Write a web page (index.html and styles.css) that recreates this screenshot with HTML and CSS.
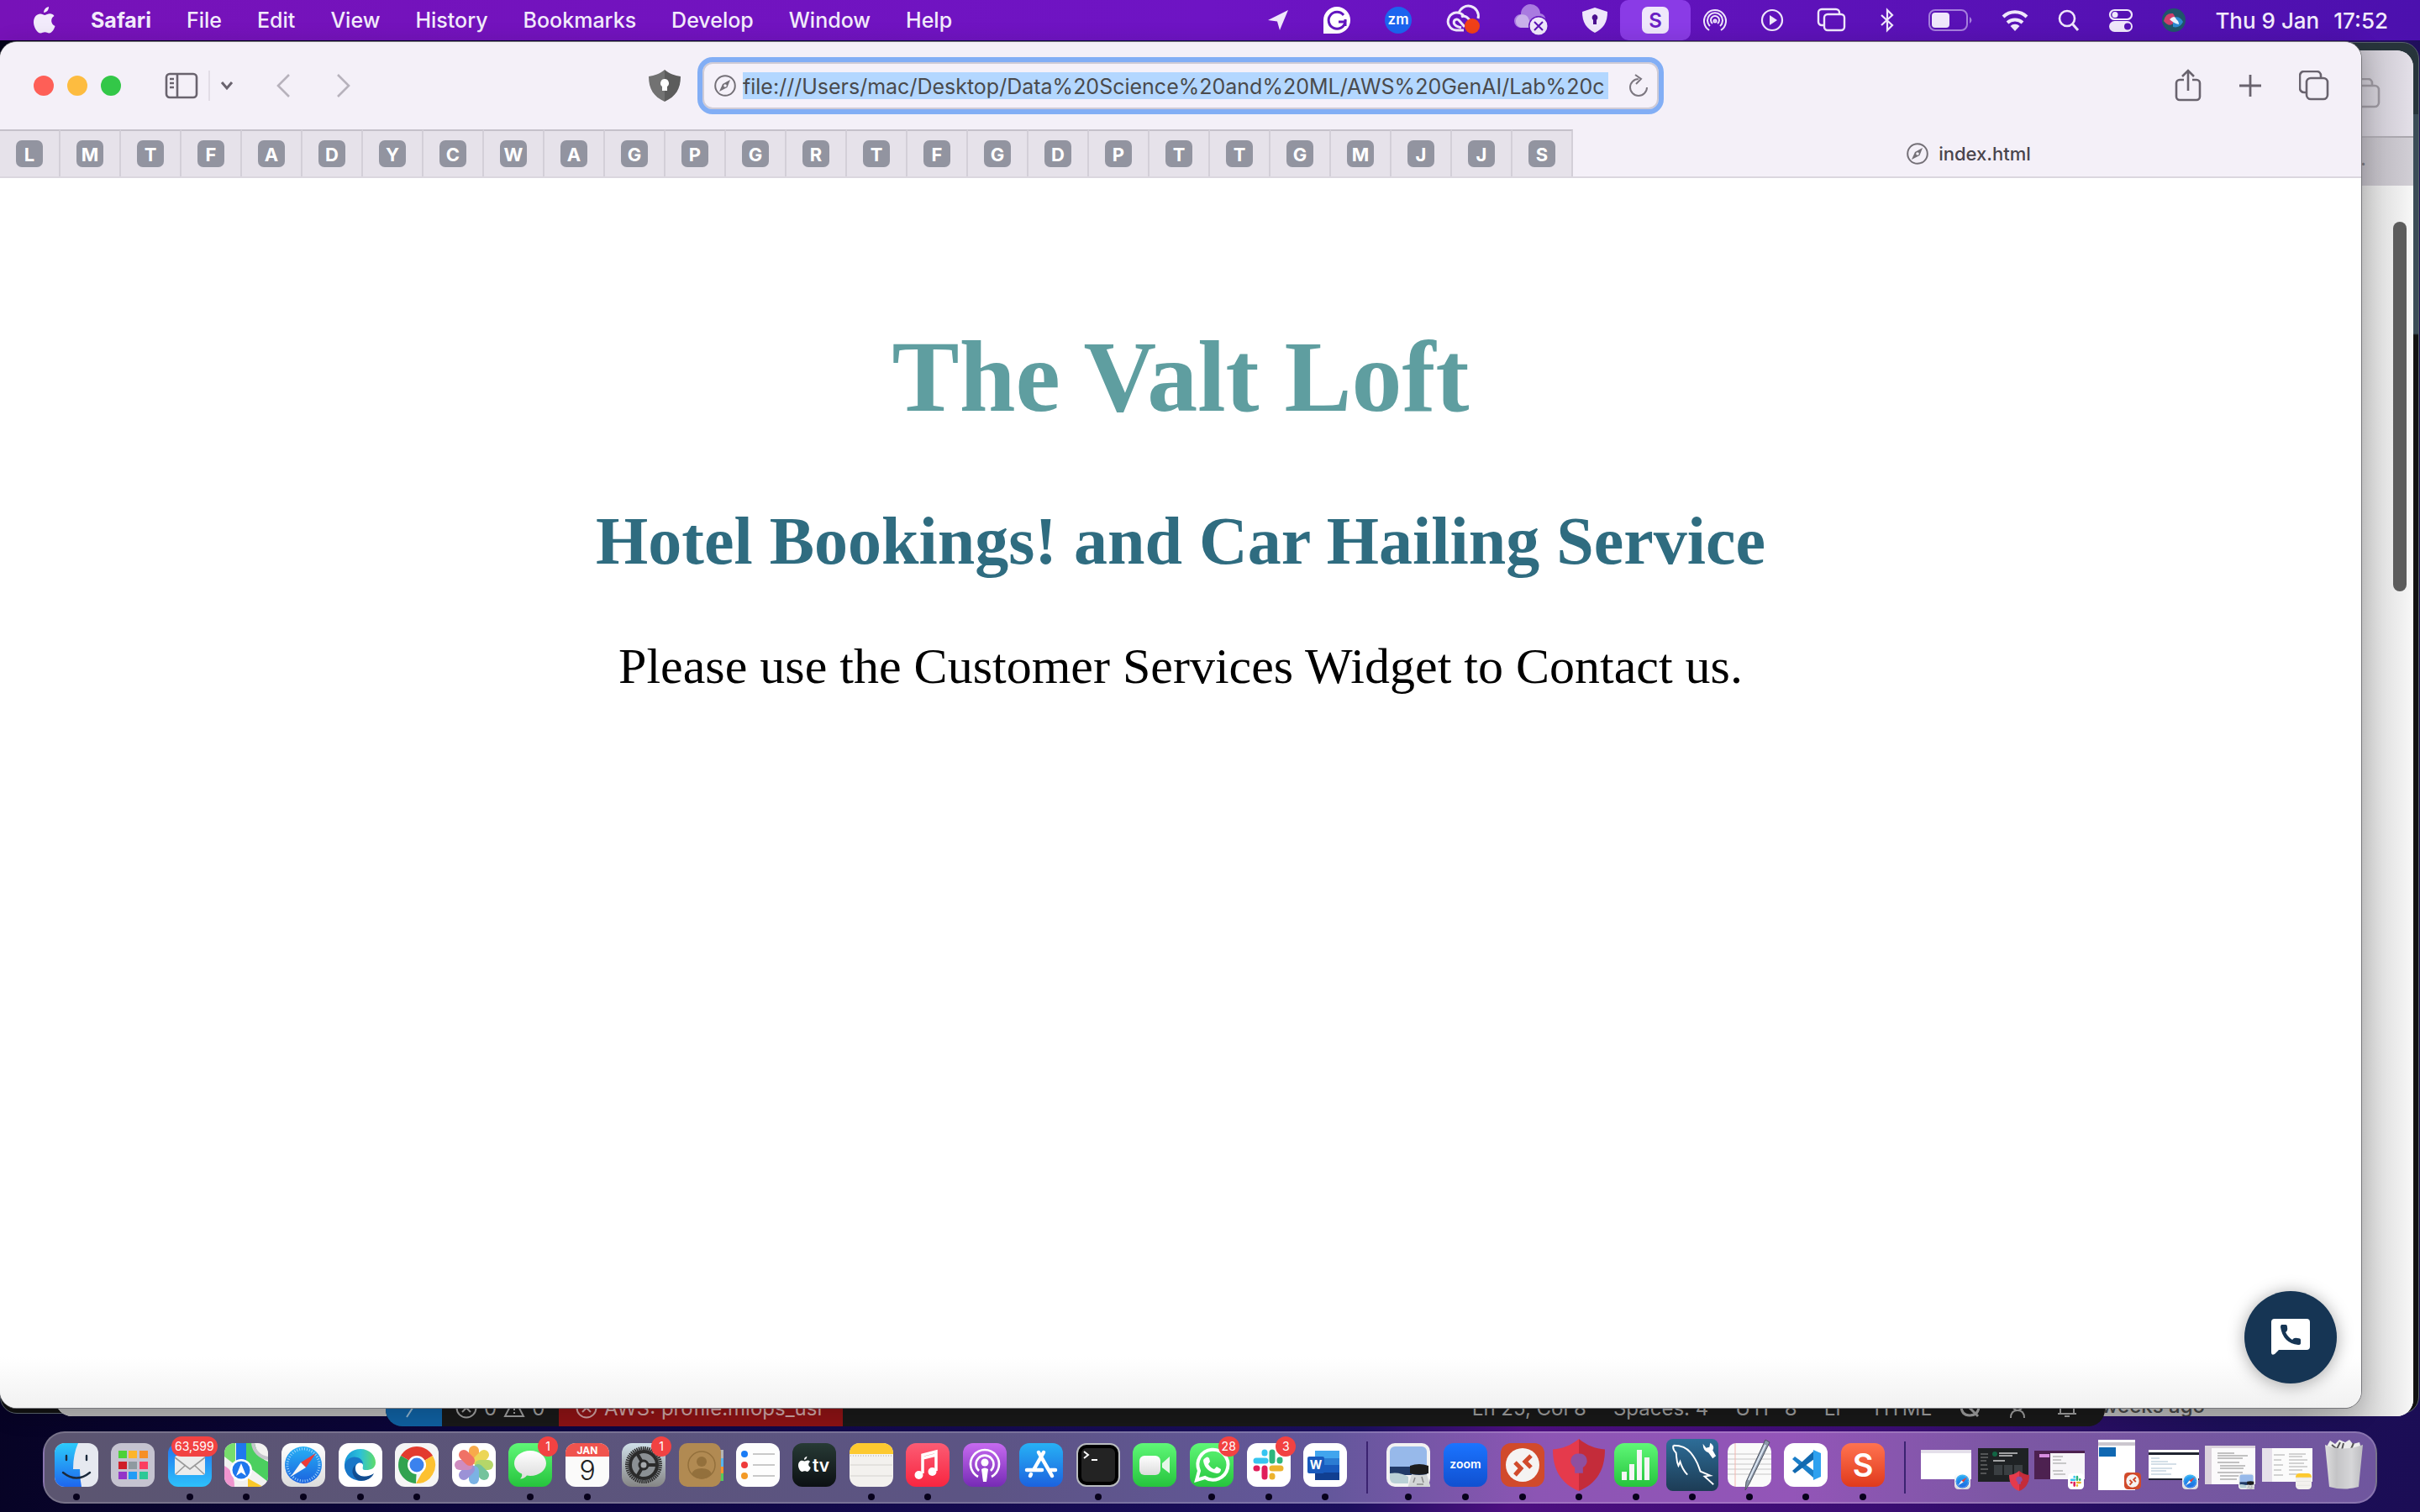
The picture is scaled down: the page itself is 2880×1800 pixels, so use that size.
FILE: index.html
```html
<!DOCTYPE html>
<html lang="en">
<head>
<meta charset="utf-8">
<title>Desktop</title>
<link rel="stylesheet" href="styles.css">
</head>
<body>
<svg class="defs" aria-hidden="true">
  <defs>
    <linearGradient id="gWhite" x1="0" y1="0" x2="0" y2="1"><stop offset="0" stop-color="#fff"/><stop offset="1" stop-color="#dcdcdc"/></linearGradient>
    <linearGradient id="gBlue" x1="0" y1="0" x2="0" y2="1"><stop offset="0" stop-color="#27b1f5"/><stop offset="1" stop-color="#1b62df"/></linearGradient>
    <linearGradient id="gMail" x1="0" y1="0" x2="0" y2="1"><stop offset="0" stop-color="#2272ef"/><stop offset="1" stop-color="#2dc1fb"/></linearGradient>
    <linearGradient id="gFinder" x1="0" y1="0" x2="0" y2="1"><stop offset="0" stop-color="#2ccbfb"/><stop offset="1" stop-color="#1e66ee"/></linearGradient>
    <linearGradient id="gGreen" x1="0" y1="0" x2="0" y2="1"><stop offset="0" stop-color="#5ff777"/><stop offset="1" stop-color="#26c43d"/></linearGradient>
    <linearGradient id="gRed" x1="0" y1="0" x2="0" y2="1"><stop offset="0" stop-color="#fb5c74"/><stop offset="1" stop-color="#f92540"/></linearGradient>
    <linearGradient id="gPurple" x1="0" y1="0" x2="0" y2="1"><stop offset="0" stop-color="#c66af0"/><stop offset="1" stop-color="#762bb5"/></linearGradient>
    <linearGradient id="gGrey" x1="0" y1="0" x2="0" y2="1"><stop offset="0" stop-color="#cfdfe8"/><stop offset="1" stop-color="#858585"/></linearGradient>
    <linearGradient id="gDark" x1="0" y1="0" x2="0" y2="1"><stop offset="0" stop-color="#273a35"/><stop offset="1" stop-color="#0c1013"/></linearGradient>
    <linearGradient id="gZoom" x1="0" y1="0" x2="0" y2="1"><stop offset="0" stop-color="#1b74ff"/><stop offset="1" stop-color="#1050d0"/></linearGradient>
    <linearGradient id="gOrange" x1="0" y1="0" x2="0" y2="1"><stop offset="0" stop-color="#ff7350"/><stop offset="1" stop-color="#e03a1c"/></linearGradient>
    <linearGradient id="gSql" x1="0" y1="0" x2="0" y2="1"><stop offset="0" stop-color="#2d6d98"/><stop offset="1" stop-color="#1d3c55"/></linearGradient>
    <linearGradient id="gEdge" x1="0" y1="0" x2="1" y2="0"><stop offset="0" stop-color="#1795d8"/><stop offset=".5" stop-color="#2cc0d8"/><stop offset="1" stop-color="#5fdc6a"/></linearGradient>
    <linearGradient id="gBin" x1="0" y1="0" x2="1" y2="0"><stop offset="0" stop-color="#dedede"/><stop offset=".3" stop-color="#c4c4c6"/><stop offset=".7" stop-color="#d6d6d8"/><stop offset="1" stop-color="#bcbcc0"/></linearGradient>
    <symbol id="safari" viewBox="0 0 52 52"><rect width="52" height="52" rx="12" fill="url(#gWhite)"/><circle cx="26" cy="26" r="22" fill="url(#gBlue)"/><circle cx="26" cy="26" r="19" fill="none" stroke="#9fd3fb" stroke-width="3" stroke-dasharray="1 2"/><path d="M41 12 29 29 23 23z" fill="#ef3b36"/><path d="M11 40 23 23 29 29z" fill="#f5f5f5"/></symbol>
    <symbol id="slack" viewBox="0 0 52 52"><rect width="52" height="52" rx="12" fill="#fff"/><g stroke-width="7" stroke-linecap="round" fill="none"><path d="M22 21H11M21 11v1" stroke="#36c5f0"/><path d="M30 11v10M39 20v1" stroke="#2eb67d"/><path d="M30 30h10M30 39v1" stroke="#ecb22e"/><path d="M21 30v10M11 30h1" stroke="#e01e5a"/></g></symbol>
    <symbol id="rdp" viewBox="0 0 52 52"><rect width="52" height="52" rx="12" fill="#d14a2b"/><circle cx="26" cy="26" r="20" fill="#f5f3f2"/><path d="m17 23 7 7-7 8M36 15l-7 7 7 7" fill="none" stroke="#d14a2b" stroke-width="5"/></symbol>
    <symbol id="avast" viewBox="0 0 64 64"><path d="M32 0C22 8 12 12 0 13c0 25 10 42 32 51z" fill="#e53a4c"/><path d="M32 0c10 8 20 12 32 13 0 25-10 42-32 51z" fill="#c42c3a"/><path d="M32 18a9 9 0 0 0-5 17v7h10v-7a9 9 0 0 0-5-17" fill="#8f4f9f"/></symbol>
    <symbol id="notes" viewBox="0 0 52 52"><rect width="52" height="52" rx="12" fill="#f3f1ee"/><path d="M0 13V12A12 12 0 0 1 12 0h28a12 12 0 0 1 12 12v1z" fill="#fdc92f"/><path d="M1 26h50M1 39h50" stroke="#d4d2cf"/><path d="M1 15h50" stroke="#aaa" stroke-dasharray="1 2"/></symbol>
    <symbol id="preview" viewBox="0 0 52 52"><rect width="52" height="52" rx="10" fill="#f2f2f2"/><path d="M4 10a6 6 0 0 1 6-6h32a6 6 0 0 1 6 6v18H4z" fill="#97b9ea"/><path d="M4 28h44v10H4z" fill="#203a68"/><path d="M4 36q12-2 22 4v8H10a6 6 0 0 1-6-6z" fill="#b9d0d6"/><path d="M28 27q11-4 22 0v9q-11 3-22 0z" fill="#1c1c1c"/><path d="m30 37-5 17h28l-5-17q-9 2-18 0" fill="#d3d6d6"/><path d="m34 41-2 6M42 40l2 7M36 49h8" stroke="#8a8a8a" stroke-width="1.500"/></symbol>
    <symbol id="compass" viewBox="0 0 26 26"><circle cx="13" cy="13" r="11.8" fill="none" stroke="currentColor" stroke-width="2"/><path d="m19 6-3.500 9L6 20l4-9z" fill="currentColor"/><circle cx="13" cy="13" r="1.800" fill="#f4f0f8"/></symbol>
    <symbol id="copies" viewBox="0 0 36 36"><path d="M9 26H6a5 5 0 0 1-5-5V6a5 5 0 0 1 5-5h15a5 5 0 0 1 5 5v3" fill="none" stroke="currentColor" stroke-width="2.600"/><rect x="9" y="9" width="25" height="25" rx="5" fill="none" stroke="currentColor" stroke-width="2.600"/></symbol>
    <symbol id="apple" viewBox="0 0 26 32"><path d="M18 0c.3 3-2 7-6 7 0-3 2-6 6-7M24.500 11c-5 3-4 10 1 12-1 4-4 8.500-7 8.500-2 0-3-1.200-5-1.200s-3.500 1.200-5.200 1.200C4 31.500 0 24 0 18.500 0 12 4 8.500 8 8.500c2.300 0 4 1.400 5.500 1.400S17 8.300 19.500 8.300c2 0 4 1 5 2.700" fill="currentColor"/></symbol>
  </defs>
</svg>

<div class="desktop">
  <header class="menubar">
    <nav class="menus" aria-label="Menu bar">
      <button class="menu" aria-label="Apple"><svg width="26" height="32"><use href="#apple"/></svg></button>
      <button class="menu menu-app">Safari</button>
      <button class="menu">File</button>
      <button class="menu">Edit</button>
      <button class="menu">View</button>
      <button class="menu">History</button>
      <button class="menu">Bookmarks</button>
      <button class="menu">Develop</button>
      <button class="menu">Window</button>
      <button class="menu">Help</button>
    </nav>
    <div class="extras">
      <svg class="w26" viewBox="0 0 26 26"><path d="M25 1 1 13l11 1.500L15 25z" fill="#efe7fb"/></svg>
      <svg class="w32" viewBox="0 0 32 32"><path d="M0 32V16a16 16 0 1 1 16 16z" fill="#fff"/><path d="M24 10a10 10 0 1 0 2 8h-8M26 15v8" fill="none" stroke="#6115bf" stroke-width="3"/></svg>
      <svg class="w32" viewBox="0 0 32 32"><circle cx="16" cy="16" r="16" fill="#1c64ef"/><text x="16" y="21" text-anchor="middle" class="svg-zm">zm</text></svg>
      <svg class="w40" viewBox="0 0 40 32"><path d="M21 28H12a10.500 10.500 0 1 1 9-17M15 8a11 11 0 0 1 23 6M22 24l-6-7c-3-4-9-1-6 4 2 3 5 3 8 4M18 12c4-2 7 0 10 4" fill="none" stroke="#efe7fb" stroke-width="3"/><circle cx="31" cy="23" r="9" fill="#f04018"/></svg>
      <svg class="w40" viewBox="0 0 40 34"><path d="M8 26a8 8 0 0 1 0-16A11 11 0 0 1 31 9a8 8 0 0 1 2 15z" fill="#a97be0"/><path d="M8 26a8 8 0 1 1 8-13l6 13z" fill="#c9b0ea"/><circle cx="29" cy="24" r="12" fill="#6012bc"/><circle cx="29" cy="24" r="10.500" fill="#efe7fb"/><path d="m24 19 10 10m0-10L24 29" stroke="#5b14b4" stroke-width="2"/></svg>
      <svg class="w30" viewBox="0 0 30 30"><path d="M15 0 30 5c0 13-5 20-15 25C5 25 0 18 0 5z" fill="#efe7fb"/><path d="M15 8a4 4 0 0 0-2 7v5h4v-5a4 4 0 0 0-2-7" fill="#4b108f"/></svg>
      <span class="extra-active"><svg class="w32" viewBox="0 0 32 32"><rect width="32" height="32" rx="7" fill="#efe7fb"/><text x="16" y="25" text-anchor="middle" class="svg-s">S</text></svg></span>
      <svg class="w28" viewBox="0 0 28 28" fill="none" stroke="#efe7fb" stroke-width="2"><path d="M7 26a13 13 0 1 1 14 0M8 21a9 9 0 1 1 12 0M11 18a5 5 0 1 1 6 0"/><circle cx="14" cy="15" r="1.500"/></svg>
      <svg class="w26" viewBox="0 0 26 26"><circle cx="13" cy="13" r="12" fill="none" stroke="#efe7fb" stroke-width="2.200"/><path d="m10 7 9 6-9 6z" fill="#efe7fb"/></svg>
      <svg class="w34" viewBox="0 0 34 28" fill="none" stroke="#efe7fb" stroke-width="2.400"><path d="M8 20H5a4 4 0 0 1-4-4V5a4 4 0 0 1 4-4h17a4 4 0 0 1 4 4v2"/><rect x="8" y="7" width="24" height="19" rx="4"/></svg>
      <svg class="w16" viewBox="0 0 16 28"><path d="m1 8 13 12-6 6V2l6 6L1 20" fill="none" stroke="#efe7fb" stroke-width="2.200"/></svg>
      <div class="extras-system">
        <svg class="w52" viewBox="0 0 52 26"><rect x="1" y="1" width="45" height="24" rx="7" fill="none" stroke="#a67fdd" stroke-width="2"/><path d="M49 9q5 4 0 8z" fill="#a67fdd"/><rect x="4" y="4" width="21" height="18" rx="4" fill="#efe7fb"/></svg>
        <svg class="w32" viewBox="0 0 32 32"><path d="M2 12a20 20 0 0 1 28 0M7 19a13 13 0 0 1 18 0" fill="none" stroke="#efe7fb" stroke-width="4"/><path d="M10.500 23a8 8 0 0 1 11 0L16 29z" fill="#efe7fb"/></svg>
        <svg class="w26" viewBox="0 0 26 26"><circle cx="11" cy="11" r="9" fill="none" stroke="#efe7fb" stroke-width="2.600"/><path d="m17 17 7 8" stroke="#efe7fb" stroke-width="3"/></svg>
        <svg class="w28" viewBox="0 0 28 28"><rect x="1" y="2" width="26" height="11" rx="5.500" fill="none" stroke="#efe7fb" stroke-width="2.200"/><circle cx="7" cy="7.500" r="3.500" fill="#efe7fb"/><rect y="15" width="28" height="13" rx="6.500" fill="#efe7fb"/><circle cx="22" cy="21.500" r="4" fill="#5612b5"/></svg>
        <svg class="w28" viewBox="0 0 28 28"><circle cx="14" cy="14" r="14" fill="#20566a"/><path d="M2 15q2-10 11-9 4 5 2 10-6 8-13-1" fill="#cf3f6c"/><path d="M13 22q8 2 12-6-4-8-12-5" fill="#2d8ad0"/><path d="M9 13q6-6 8 0 3 2 3 6-6-1-11-6" fill="#e9f4ff"/></svg>
        <time class="clock"><span>Thu 9 Jan</span><span>17:52</span></time>
      </div>
    </div>
  </header>

  <div class="window dark-window"></div>

  <div class="window back-safari">
    <div class="back-toolbar"><svg class="w36" viewBox="0 0 36 36"><use href="#copies"/></svg></div>
    <div class="back-tabs"><span>…</span></div>
    <div class="back-page"><div class="back-scroll"></div><p class="back-note">weeks ago</p></div>
  </div>

  <div class="window editor">
    <footer class="status">
      <span class="status-remote"><svg class="w26" viewBox="0 0 26 26"><path d="m6 2 7 8-9 14M20 2l-7 8" fill="none" stroke="#8fb0c8" stroke-width="2"/></svg></span>
      <span class="status-problems">
        <svg class="w26" viewBox="0 0 26 26" fill="none" stroke="#999" stroke-width="2"><circle cx="13" cy="13" r="11.500"/><path d="m8 8 10 10M18 8 8 18"/></svg><span>0</span>
        <svg class="w26" viewBox="0 0 26 26" fill="none" stroke="#999" stroke-width="2"><path d="m13 2 11 21H2zM13 10v6M13 18v2"/></svg><span>0</span>
      </span>
      <span class="status-aws"><svg class="w26" viewBox="0 0 26 26" fill="none" stroke="#c79a9a" stroke-width="2"><circle cx="13" cy="13" r="11.500"/><path d="m8 8 10 10M18 8 8 18"/></svg><span>AWS: profile:mlops_usr</span></span>
      <span class="status-right">
        <span>Ln 25, Col 8</span><span>Spaces: 4</span><span>UTF-8</span><span>LF</span><span>HTML</span>
        <svg class="w26" viewBox="0 0 26 26" fill="none" stroke="#999" stroke-width="3"><path d="M3 10q0 12 10 12 11 0 11-12M3 3l20 20"/></svg>
        <svg class="w26" viewBox="0 0 26 26" fill="none" stroke="#999" stroke-width="2"><circle cx="12" cy="10" r="6"/><path d="M4 25q0-9 8-9t8 9M19 6l5-4"/></svg>
        <svg class="w26" viewBox="0 0 26 26" fill="none" stroke="#999" stroke-width="2"><path d="M5 20V10q0-7 8-7t8 7v10M2 20h22M10 23h6"/></svg>
      </span>
    </footer>
  </div>

  <main class="window browser">
    <div class="toolbar">
      <div class="tools-left">
        <div class="lights">
          <button class="light light-close" aria-label="Close"></button>
          <button class="light light-min" aria-label="Minimise"></button>
          <button class="light light-max" aria-label="Zoom"></button>
        </div>
        <button class="tool tool-sidebar" aria-label="Sidebar"><svg width="40" height="32" viewBox="0 0 40 32" fill="none" stroke="#69636e" stroke-width="2.600"><rect x="2" y="2" width="36" height="28" rx="4"/><path d="M15 2v28M6 8h5M6 13h5M6 18h5"/></svg></button>
        <button class="tool tool-groups" aria-label="Tab groups"><svg width="16" height="12" viewBox="0 0 16 12"><path d="m2 2 6 7 6-7" fill="none" stroke="#69636e" stroke-width="3"/></svg></button>
        <button class="tool tool-back" aria-label="Back"><svg width="18" height="30" viewBox="0 0 18 30"><path d="M16 2 3 15l13 13" fill="none" stroke="#b7b2bc" stroke-width="2.600"/></svg></button>
        <button class="tool tool-forward" aria-label="Forward"><svg width="18" height="30" viewBox="0 0 18 30"><path d="m2 2 13 13L2 28" fill="none" stroke="#b7b2bc" stroke-width="2.600"/></svg></button>
        <button class="tool tool-shield" aria-label="Privacy report"><svg width="38" height="38" viewBox="0 0 38 38"><path d="M19 0C13 5 7 7 0 8c0 15 6 24 19 30z" fill="#727272"/><path d="M19 0c6 5 12 7 19 8 0 15-6 24-19 30z" fill="#5c5c5c"/><path d="M19 11a5 5 0 0 0-3 9v5h6v-5a5 5 0 0 0-3-9" fill="#fff"/></svg></button>
      </div>
      <form class="address">
        <svg class="w26 icon-grey" viewBox="0 0 26 26"><use href="#compass"/></svg>
        <input class="address-input" type="text" aria-label="Address" value="file:///Users/mac/Desktop/Data%20Science%20and%20ML/AWS%20GenAI/Lab%20c">
        <button class="tool" type="button" aria-label="Reload"><svg width="24" height="28" viewBox="0 0 24 28" fill="none" stroke="#7c7780" stroke-width="2"><path d="M12 6a10 10 0 1 0 10 10M8 1l7 5-6 6"/></svg></button>
      </form>
      <div class="tools-right">
        <button class="tool" aria-label="Share"><svg width="32" height="38" viewBox="0 0 32 38" fill="none" stroke="#69636e" stroke-width="2.600"><path d="M11 12H6a4 4 0 0 0-4 4v16a4 4 0 0 0 4 4h20a4 4 0 0 0 4-4V16a4 4 0 0 0-4-4h-5M16 25V2M9 8l7-7 7 7"/></svg></button>
        <button class="tool" aria-label="New tab"><svg width="28" height="28" viewBox="0 0 28 28"><path d="M14 1v26M1 14h26" stroke="#69636e" stroke-width="2.800"/></svg></button>
        <button class="tool" aria-label="Tab overview"><svg width="36" height="36"><use href="#copies"/></svg></button>
      </div>
    </div>
    <div class="tabs">
      <button class="tab"><span>L</span></button><button class="tab"><span>M</span></button><button class="tab"><span>T</span></button><button class="tab"><span>F</span></button><button class="tab"><span>A</span></button><button class="tab"><span>D</span></button><button class="tab"><span>Y</span></button><button class="tab"><span>C</span></button><button class="tab"><span>W</span></button><button class="tab"><span>A</span></button><button class="tab"><span>G</span></button><button class="tab"><span>P</span></button><button class="tab"><span>G</span></button><button class="tab"><span>R</span></button><button class="tab"><span>T</span></button><button class="tab"><span>F</span></button><button class="tab"><span>G</span></button><button class="tab"><span>D</span></button><button class="tab"><span>P</span></button><button class="tab"><span>T</span></button><button class="tab"><span>T</span></button><button class="tab"><span>G</span></button><button class="tab"><span>M</span></button><button class="tab"><span>J</span></button><button class="tab"><span>J</span></button><button class="tab"><span>S</span></button>
      <button class="tab-current"><svg class="w26 icon-grey" viewBox="0 0 26 26"><use href="#compass"/></svg>index.html</button>
    </div>
    <article class="page">
      <h1>The Valt Loft</h1>
      <h2>Hotel Bookings! and Car Hailing Service</h2>
      <p>Please use the Customer Services Widget to Contact us.</p>
      <button class="chat" aria-label="Contact us"><svg width="48" height="44" viewBox="0 0 48 44"><path d="M5 0h38a4 4 0 0 1 4 4v29a4 4 0 0 1-4 4H10l-5 5q-4 2-4-2V4a4 4 0 0 1 4-4" fill="#fff"/><path d="M13 7h5q2 0 2 3 1 4-2 6 3 6 8 9 2-3 6-2 4 0 4 2v4q0 2-3 2Q15 29 12 10q0-2 1-3" fill="#163554"/></svg></button>
    </article>
  </main>

  <nav class="dock" aria-label="Dock">
    <button class="app open" aria-label="Finder"><svg viewBox="0 0 52 52"><rect width="52" height="52" rx="12" fill="#e6e9f0"/><path d="M28 0H12A12 12 0 0 0 0 12v28a12 12 0 0 0 12 12h20q-2-10-2-21h-8Q22 13 28 0" fill="url(#gFinder)"/><path d="M14 15v5M38 15v5M10 35q16 13 32 0" fill="none" stroke="#1b2a3c" stroke-width="2.400" stroke-linecap="round"/></svg></button>
    <button class="app" aria-label="Launchpad"><svg viewBox="0 0 52 52"><rect width="52" height="52" rx="12" fill="#c5c3d0"/><path d="M9 9h10v9H9z" fill="#4cd137"/><path d="M21 9h10v9H21z" fill="#fdb52b"/><path d="M34 9h10v9H34z" fill="#f68f25"/><path d="M9 22h10v9H9z" fill="#cf1e28"/><path d="M21 22h10v9H21z" fill="#8f9aa0"/><path d="M34 22h10v9H34z" fill="#fb3e60"/><path d="M9 34h10v9H9z" fill="#9336c8"/><path d="M21 34h10v9H21z" fill="#219cf5"/><path d="M34 34h10v9H34z" fill="#2cc896"/></svg></button>
    <button class="app open" aria-label="Mail"><svg viewBox="0 0 52 52"><rect width="52" height="52" rx="12" fill="url(#gMail)"/><rect x="8" y="15" width="36" height="23" rx="3" fill="#ececec"/><path d="m8 17 18 14 18-14M9 37l12-11M43 37 31 26" fill="none" stroke="#9a9a9a" stroke-width="1.600"/></svg><span class="badge">63,599</span></button>
    <button class="app open" aria-label="Maps"><svg viewBox="0 0 52 52"><clipPath id="cm"><rect width="52" height="52" rx="12"/></clipPath><g clip-path="url(#cm)"><path d="M0 0h52v52H0z" fill="#f2f2f0"/><path d="M0 0h13v26L0 16z" fill="#77de6c"/><path d="M26 0h10q4 18 16 22v24L26 26z" fill="#4bcf5f"/><path d="M0 27q12 6 12 25H0z" fill="#f095cf"/><path d="M28 52V42l18 10z" fill="#fbc829"/><path d="M52 18A20 20 0 0 1 34 0" fill="none" stroke="#c5c5cb" stroke-width="4"/><path d="M14 0h12v30H14z" fill="#1f77ee"/></g><circle cx="20" cy="32" r="13" fill="#fff"/><circle cx="20" cy="32" r="10.500" fill="#1f77ee"/><path d="m20 24 6 15-6-4-6 4z" fill="#fff"/></svg></button>
    <button class="app open" aria-label="Safari"><svg><use href="#safari"/></svg></button>
    <button class="app open" aria-label="Edge"><svg viewBox="0 0 52 52"><rect width="52" height="52" rx="12" fill="#fff"/><path d="M7 26C7 14 16 7 26 7c11 0 18 8 18 16 0 7-6 9-11 9-6 0-4-2-4-6-2-6-11-5-14 1-2 5 0 12 4 15C11 40 7 33 7 26" fill="url(#gEdge)"/><path d="M7 26c2-7 9-11 15-9 5 1 7 5 7 8-4-3-9-1-9 5 0 9 11 13 21 7-5 8-14 9-20 7C12 42 7 35 7 26" fill="#1876c8"/><path d="M20 26c-4 12 10 18 22 10-4 8-13 10-19 8-7-4-9-13-3-18" fill="#124d90"/></svg></button>
    <button class="app open" aria-label="Chrome"><svg viewBox="0 0 52 52"><rect width="52" height="52" rx="12" fill="#f5f5f5"/><path d="M26 26 7 15a22 22 0 0 1 38 0z" fill="#e33b2e"/><path d="M26 26 7 15a22 22 0 0 0 18 33z" fill="#31a350"/><path d="m26 26 19-11a22 22 0 0 1-20 33l9-16z" fill="#fdc131"/><circle cx="26" cy="26" r="11" fill="#fff"/><circle cx="26" cy="26" r="8.500" fill="#3b82ee"/></svg></button>
    <button class="app" aria-label="Photos"><svg viewBox="0 0 52 52"><rect width="52" height="52" rx="12" fill="#fff"/><g opacity=".85"><rect x="20" y="3" width="12" height="22" rx="6" fill="#f79c2c"/><rect x="20" y="3" width="12" height="22" rx="6" fill="#e9cf3a" transform="rotate(45 26 26)"/><rect x="20" y="3" width="12" height="22" rx="6" fill="#a9d04f" transform="rotate(90 26 26)"/><rect x="20" y="3" width="12" height="22" rx="6" fill="#5cb98b" transform="rotate(135 26 26)"/><rect x="20" y="3" width="12" height="22" rx="6" fill="#65a5e0" transform="rotate(180 26 26)"/><rect x="20" y="3" width="12" height="22" rx="6" fill="#8a7fd0" transform="rotate(225 26 26)"/><rect x="20" y="3" width="12" height="22" rx="6" fill="#c678b6" transform="rotate(270 26 26)"/><rect x="20" y="3" width="12" height="22" rx="6" fill="#ee5a4c" transform="rotate(315 26 26)"/></g></svg></button>
    <button class="app open" aria-label="Messages"><svg viewBox="0 0 52 52"><rect width="52" height="52" rx="12" fill="url(#gGreen)"/><path d="M26 9c11 0 19 7 19 15s-8 15-19 15l-4-.5q-3 4-8 4 3-3 2-6C10 34 7 29 7 24 7 16 15 9 26 9" fill="url(#gWhite)"/></svg><span class="badge">1</span></button>
    <button class="app open" aria-label="Calendar"><svg viewBox="0 0 52 52"><rect width="52" height="52" rx="12" fill="#fbfbfa"/><path d="M0 16v-4A12 12 0 0 1 12 0h28a12 12 0 0 1 12 12v4z" fill="#f0544e"/><text x="26" y="13" text-anchor="middle" class="svg-jan">JAN</text><text x="26" y="44" text-anchor="middle" class="svg-day">9</text></svg></button>
    <button class="app" aria-label="System Settings"><svg viewBox="0 0 52 52"><rect width="52" height="52" rx="12" fill="url(#gGrey)"/><circle cx="26" cy="26" r="20" fill="#8b9094" stroke="#2b2b2b" stroke-width="4" stroke-dasharray="1.500 1"/><circle cx="26" cy="26" r="16" fill="none" stroke="#2b2b2b" stroke-width="4"/><path d="M26 26 18 12M26 26h17M26 26l-8 14" stroke="#2b2b2b" stroke-width="4"/><circle cx="26" cy="26" r="5" fill="#a5a9ac" stroke="#2b2b2b" stroke-width="3"/></svg><span class="badge">1</span></button>
    <button class="app" aria-label="Contacts"><svg viewBox="0 0 52 52"><path d="M46 8h7v10h-7z" fill="#b5b5b5"/><path d="M46 18h7v10h-7z" fill="#55b5f0"/><path d="M46 28h7v8h-7z" fill="#f7932d"/><path d="M46 36h7v9h-7z" fill="#55c95c"/><rect width="50" height="52" rx="10" fill="#b18a52"/><g fill="#93703c"><circle cx="27" cy="22" r="6"/><path d="M15 37q2-7 12-7t12 7q-12 11-24 0"/></g><circle cx="27" cy="26" r="16" fill="none" stroke="#93703c" stroke-width="1.500"/></svg></button>
    <button class="app" aria-label="Reminders"><svg viewBox="0 0 52 52"><rect width="52" height="52" rx="12" fill="#fdfdfd"/><g stroke="#c9c9c9" stroke-width="2"><path d="M20 13h26M20 26h26M20 39h26"/></g><circle cx="10" cy="13" r="4" fill="#1a7cf5"/><circle cx="10" cy="26" r="4" fill="#ee3b3a"/><circle cx="10" cy="39" r="4" fill="#f39a26"/></svg></button>
    <button class="app" aria-label="TV"><svg viewBox="0 0 52 52"><rect width="52" height="52" rx="12" fill="url(#gDark)"/><svg x="7" y="15" width="15" height="20" color="#fff"><use href="#apple"/></svg><text x="34" y="34" text-anchor="middle" class="svg-tv">tv</text></svg></button>
    <button class="app open" aria-label="Notes"><svg><use href="#notes"/></svg></button>
    <button class="app open" aria-label="Music"><svg viewBox="0 0 52 52"><rect width="52" height="52" rx="12" fill="url(#gRed)"/><path d="M20 36V14l16-4v23M20 18l16-4" fill="none" stroke="#fff" stroke-width="3.500"/><circle cx="15.500" cy="38" r="5" fill="#fff"/><circle cx="31.500" cy="34" r="5" fill="#fff"/></svg></button>
    <button class="app" aria-label="Podcasts"><svg viewBox="0 0 52 52"><rect width="52" height="52" rx="12" fill="url(#gPurple)"/><g fill="none" stroke="#fff" stroke-width="2.600"><path d="M18 40a17 17 0 1 1 16 0M19 33a10.500 10.500 0 1 1 14 0"/></g><circle cx="26" cy="23" r="4.500" fill="#fff"/><path d="M22 31q4-3 8 0l-2 15h-4z" fill="#fff"/></svg></button>
    <button class="app" aria-label="App Store"><svg viewBox="0 0 52 52"><rect width="52" height="52" rx="12" fill="url(#gBlue)"/><g stroke="#fff" stroke-width="4.500" stroke-linecap="round"><path d="M29 11 17 32M13 39l1-2M23 11l16 28M9 32h18M37 32h6"/></g></svg></button>
    <button class="app open" aria-label="Terminal"><svg viewBox="0 0 52 52"><rect width="52" height="52" rx="12" fill="#b9bcc0"/><rect x="2" y="2" width="48" height="48" rx="10" fill="#000"/><rect x="6" y="6" width="40" height="40" rx="6" fill="#232323"/><path d="m9 10 5 4-5 4M18 20h7" fill="none" stroke="#fff" stroke-width="2"/></svg></button>
    <button class="app" aria-label="FaceTime"><svg viewBox="0 0 52 52"><rect width="52" height="52" rx="12" fill="url(#gGreen)"/><rect x="8" y="15" width="25" height="23" rx="6" fill="url(#gWhite)"/><path d="m35 24 9-8v20l-9-7z" fill="#e6f6e8"/></svg></button>
    <button class="app open" aria-label="WhatsApp"><svg viewBox="0 0 52 52"><rect width="52" height="52" rx="12" fill="url(#gGreen)"/><path d="m8 44 3-11a18 18 0 1 1 7 8z" fill="none" stroke="#fff" stroke-width="4"/><path d="M18 18q3-3 5 0l1 4-2 3q3 5 7 6l3-3 5 3q0 5-5 5-14-2-16-15 0-2 2-3" fill="#fff"/></svg><span class="badge">28</span></button>
    <button class="app open" aria-label="Slack"><svg><use href="#slack"/></svg><span class="badge">3</span></button>
    <button class="app open" aria-label="Word"><svg viewBox="0 0 52 52"><rect width="52" height="52" rx="12" fill="#fff"/><path d="M14 9h29v9H14z" fill="#41a5ee"/><path d="M14 18h29v8H14z" fill="#2b7cd3"/><path d="M14 26h29v9H14z" fill="#185abd"/><path d="M14 35h29v9H14z" fill="#103f91"/><rect x="5" y="16" width="20" height="20" rx="2" fill="#185abd"/><text x="15" y="31" text-anchor="middle" class="svg-word">W</text></svg></button>
    <span class="divider"></span>
    <button class="app open" aria-label="Preview"><svg viewBox="0 0 52 52"><use href="#preview"/></svg></button>
    <button class="app open" aria-label="Zoom"><svg viewBox="0 0 52 52"><rect width="52" height="52" rx="12" fill="url(#gZoom)"/><text x="26" y="30" text-anchor="middle" class="svg-zoom">zoom</text></svg></button>
    <button class="app open" aria-label="Remote Desktop"><svg><use href="#rdp"/></svg></button>
    <button class="app app-large open" aria-label="Antivirus"><svg><use href="#avast"/></svg></button>
    <button class="app open" aria-label="Numbers"><svg viewBox="0 0 52 52"><rect width="52" height="52" rx="12" fill="url(#gGreen)"/><path d="M9 34h6v10H9zM18 25h6v19h-6zM27 8h6v36h-6zM36 17h6v27h-6z" fill="#f5f5f5"/></svg></button>
    <button class="app app-large open" aria-label="MySQL Workbench"><svg viewBox="0 0 64 64"><rect width="64" height="64" rx="8" fill="url(#gSql)"/><path d="M9 8q14 0 21 9c9 11 9 16 12 23l12 5-7 1 11 10M9 8q-2 4 3 9c1 6 0 10 3 16l2-5q3 10 9 16" fill="none" stroke="#fff" stroke-width="2"/><path d="m45 6 4 5 4-1 1-5q6 4 3 9l4 7-4 3-5-7q-7-2-7-11" fill="#fff"/></svg></button>
    <button class="app open" aria-label="TextEdit"><svg viewBox="0 0 52 52"><rect width="52" height="52" rx="10" fill="#fafafa"/><path d="M0 13h52M0 19h52M0 25h52M0 31h52M0 37h52" stroke="#c6c6c6"/><path d="M9 0v52" stroke="#f3b5ae"/><path d="m45-4 5 3-24 49-5 8 1-10z" fill="#8b97a8" stroke="#4f5560"/><path d="m45 2-20 42" stroke="#dbe6f2" stroke-width="2"/></svg></button>
    <button class="app open" aria-label="Visual Studio Code"><svg viewBox="0 0 52 52"><rect width="52" height="52" rx="12" fill="#fff"/><path d="M10 19 36 42V33L13 16z" fill="#1b7fc9"/><path d="M10 33 36 9v10L13 36z" fill="#1169b0"/><path d="m35 8 9 4v28l-9 4z" fill="#2ea1ef"/></svg></button>
    <button class="app open" aria-label="Snagit"><svg viewBox="0 0 52 52"><rect width="52" height="52" rx="12" fill="url(#gOrange)"/><text x="26" y="40" text-anchor="middle" class="svg-snag">S</text></svg></button>
    <span class="divider"></span>
    <button class="thumb" aria-label="Safari window"><svg viewBox="0 0 60 60"><path d="M0 12h60v35H0z" fill="#fff"/><path d="M0 12h60v4H0z" fill="#e4dfea"/><svg x="40" y="40" width="19" height="19"><use href="#safari"/></svg></svg></button>
    <button class="thumb" aria-label="Antivirus window"><svg viewBox="0 0 60 60"><path d="M0 10h60v40H0z" fill="#1f2224"/><circle cx="20" cy="17" r="3" fill="#126544"/><path d="M25 16h22M25 19h16M18 25h14" stroke="#ccc" stroke-width="1.500"/><path d="M19 30h10v12H19zM31 30h10v12H31zM43 30h10v12H43z" fill="#3a3f42"/><path d="M3 17h9M3 21h9M3 25h7M3 30h8M3 35h9M3 40h7" stroke="#888"/><svg x="37" y="37" width="24" height="24"><use href="#avast"/></svg></svg></button>
    <button class="thumb" aria-label="Slack window"><svg viewBox="0 0 60 60"><path d="M0 13h60v34H0z" fill="#f7f5f8"/><path d="M0 13h60v3H0zM0 13h19v34H0z" fill="#4d2150"/><path d="M6 17h12v4H6z" fill="#d78de0"/><path d="M22 20h12M22 24h10M22 28h16M22 37h12M23 41h14" stroke="#999"/><svg x="40" y="40" width="19" height="19"><use href="#slack"/></svg></svg></button>
    <button class="thumb" aria-label="Remote Desktop window"><svg viewBox="0 0 60 60"><path d="M8 0h44v60H8z" fill="#fff"/><path d="M8 3h44v4H8z" fill="#cbc7cf"/><path d="M9 9h20v11H9z" fill="#1068b2"/><svg x="39" y="39" width="20" height="20"><use href="#rdp"/></svg></svg></button>
    <button class="thumb" aria-label="Safari window"><svg viewBox="0 0 60 60"><path d="M0 12h60v36H0z" fill="#fff"/><path d="M0 15h60v3H0zM0 46h60v2H0z" fill="#202430"/><path d="M3 22h10M3 26h20M3 29h30M3 34h25M3 37h18M3 41h24" stroke="#a9bfd0"/><svg x="40" y="40" width="19" height="19"><use href="#safari"/></svg></svg></button>
    <button class="thumb" aria-label="Preview window"><svg viewBox="0 0 60 60"><path d="M0 7h60v46H0z" fill="#fbfafb"/><path d="M0 7h60v3H0zM0 10h8v43H0z" fill="#dcd3dc"/><path d="M15 16h20M15 19h36M15 22h30M15 27h26M18 31h30M18 34h28M15 39h30M18 43h24M18 47h20" stroke="#888"/><svg x="40" y="40" width="19" height="19"><use href="#preview"/></svg></svg></button>
    <button class="thumb" aria-label="Notes window"><svg viewBox="0 0 60 60"><path d="M0 10h60v40H0z" fill="#fbfbfb"/><path d="M0 10h12v40H0z" fill="#e6e0ea"/><path d="M14 18h13M14 24h9M14 30h11M14 36h9M14 42h11M32 17h20M32 20h16M32 24h22M32 28h18M32 32h22M32 36h16M32 41h12" stroke="#aaa"/><svg x="40" y="40" width="19" height="19"><use href="#notes"/></svg></svg></button>
    <button class="thumb" aria-label="Bin"><svg viewBox="0 0 60 60"><path d="m10 8 4-7 6 4 5-5 7 3 5-3 4 5 8-2 2 8-18 6z" fill="#ececec"/><path d="m16 6 6 5 4-8M30 4l-2 8M42 4l-4 9" fill="none" stroke="#555" stroke-width="2"/><path d="M8 6q22 9 45 0l-5 50q-17 5-35 0z" fill="url(#gBin)"/></svg></button>
  </nav>
</div>
</body>
</html>
```
FILE: styles.css
```css
* { box-sizing: border-box; }
body { margin: 0; font-family: Inter, "Liberation Sans", sans-serif; }
button { border: 0; padding: 0; margin: 0; background: none; font: inherit; color: inherit; }
svg { display: block; flex: none; overflow: visible; }
.defs { position: absolute; width: 0; height: 0; }
.w16 { width: 16px; height: 28px; }
.w26 { width: 26px; height: 26px; }
.w28 { width: 28px; height: 28px; }
.w30 { width: 30px; height: 30px; }
.w32 { width: 32px; height: 32px; }
.w34 { width: 34px; height: 28px; }
.w36 { width: 36px; height: 36px; }
.w40 { width: 40px; height: 34px; }
.w52 { width: 52px; height: 26px; }
.icon-grey { color: #747077; }

.desktop {
  position: relative;
  height: 100vh;
  overflow: hidden;
  background: linear-gradient(100deg, #040219 0%, #0d0640 30%, #1b0f5c 60%, #4d0f80 66%, #3a0d72 80%, #1c0f58 92%, #1b0d55 100%);
}

/* Menu bar */
.menubar {
  display: flex;
  justify-content: space-between;
  height: 48px;
  padding: 0 38px 0 40px;
  color: #f2ebfb;
  font-size: 25px;
  font-weight: 500;
  background: linear-gradient(90deg, #7712b8 0%, #6e14c4 50%, #4c10ae 100%);
}
.menus { display: flex; align-items: center; gap: 42px; }
.menu-app { font-weight: 700; }
.extras { display: flex; align-items: center; gap: 41px; }
.extras-system { display: flex; align-items: center; gap: 35px; }
.extra-active {
  display: flex;
  align-items: center;
  justify-content: center;
  height: 48px;
  width: 84px;
  margin: 0 -26px;
  border-radius: 10px;
  background: #8a3be6;
}
.clock { display: flex; gap: 17px; white-space: nowrap; font-size: 26px; }
.svg-zm { font: 600 17px Inter, sans-serif; fill: #fff; }
.svg-s { font: 600 24px Inter, sans-serif; fill: #6a1fc4; }

/* Windows */
.window { position: absolute; overflow: hidden; border-radius: 20px; }
.dark-window {
  inset: 50px 1px 117px 0;
  border: 1px solid #59636a;
  background: linear-gradient(#27343b 0 85px, #3b4c57 85px 346px, #111 348px);
}
.back-safari { inset: 60px 8px 114px 66px; display: flex; flex-direction: column; background: #f4f4f4; }
.back-toolbar {
  display: flex;
  justify-content: flex-end;
  align-items: center;
  height: 104px;
  padding-right: 39px;
  color: #98949c;
  background: linear-gradient(to left, #e4e0e9, #c4c1c9 60px);
  border-bottom: 2px solid #aaa7ae;
}
.back-tabs {
  height: 57px;
  line-height: 50px;
  text-align: right;
  padding-right: 56px;
  font-size: 24px;
  color: #77747a;
  background: linear-gradient(to left, #d2cfd6, #b6b3ba 60px);
}
.back-page {
  flex: 1;
  display: flex;
  flex-direction: column;
  justify-content: space-between;
  align-items: flex-end;
  padding: 43px 8px 0 0;
  background: linear-gradient(to left, #f8f8f8, #d2d2d2 62px, #b4b4b4 140px);
}
.back-scroll { width: 16px; height: 440px; border-radius: 8px; background: #5c5c5c; }
.back-note { margin: 0 240px 0 0; font-size: 24px; line-height: 24px; font-weight: 500; color: #444; }
.editor { inset: 80px 375px 102px 459px; display: flex; align-items: flex-end; background: #181818; }
.status { flex: 1; display: flex; height: 44px; color: #999; font-size: 24px; }
.status > span { display: flex; align-items: center; }
.status-remote { width: 67px; justify-content: center; background: #0f5f9f; }
.status-problems { gap: 8px; padding: 0 16px; width: 139px; }
.status-aws { gap: 8px; padding: 0 20px; width: 338px; background: #8a1214; color: #c7a0a0; white-space: nowrap; }
.status-right { flex: 1; justify-content: flex-end; gap: 32px; padding-right: 32px; }

/* Browser */
.browser {
  inset: 50px 70px 124px 0;
  display: flex;
  flex-direction: column;
  background: #fff;
  box-shadow: 0 0 0 1px #77777b, 0 6px 30px rgba(0, 0, 0, .2);
}
.toolbar {
  display: grid;
  grid-template-columns: 830px 1fr 830px;
  align-items: center;
  height: 104px;
  background: #f4f0f8;
}
.tools-left { display: flex; align-items: center; padding-left: 40px; }
.lights { display: flex; gap: 16px; }
.light { width: 24px; height: 24px; border-radius: 50%; }
.light-close { background: #fe5f57; }
.light-min { background: #fdbc40; }
.light-max { background: #33c748; }
.tool { display: flex; align-items: center; }
.tool-sidebar { margin-left: 52px; padding-right: 12px; border-right: 2px solid #e2dde6; height: 36px; }
.tool-groups { margin-left: 12px; }
.tool-back { margin-left: 50px; }
.tool-forward { margin-left: 54px; }
.tool-shield { margin-left: 354px; }
.address {
  display: flex;
  align-items: center;
  height: 68px;
  padding: 0 12px 0 14px;
  border: 6px solid #82aef5;
  border-radius: 18px;
  background: #f5f1f9;
  box-shadow: inset 0 0 0 2px #cfcbd6;
}
.address-input {
  flex: 1;
  min-width: 0;
  height: 32px;
  margin: 0 24px 0 8px;
  padding: 2px 0 0;
  border: 0;
  font: 400 25px Inter, "Liberation Sans", sans-serif;
  color: #4a4a4c;
  background: #b3d7ff;
}
.tools-right { display: flex; align-items: center; justify-content: flex-end; gap: 44px; padding-right: 38px; color: #69636e; }
.tabs { display: flex; height: 58px; border-bottom: 2px solid #dbd7df; background: #f4f0f8; }
.tab {
  width: 72px;
  display: flex;
  align-items: center;
  justify-content: center;
  border-right: 2px solid #d3cfd8;
  border-top: 2px solid #c5c1ca;
  background: #e6e2ea;
}
.tab span {
  width: 32px;
  height: 32px;
  border-radius: 7px;
  background: #9294a0;
  color: #fff;
  font-size: 22px;
  line-height: 34px;
  font-weight: 700;
}
.tab-current { flex: 1; display: flex; align-items: center; justify-content: center; gap: 12px; padding: 2px 0 0 4px; font-size: 22px; font-weight: 500; color: #49454d; }
.page {
  position: relative;
  flex: 1;
  padding-top: 168px;
  text-align: center;
  font-family: "Liberation Serif", "Times New Roman", serif;
  color: #000;
  background: linear-gradient(to top, #f1f1f1, #fff 60px);
}
h1, h2, .page p { margin: 0; }
h1 { font-size: 120px; line-height: 138px; color: #5f9ea0; }
h2 { font-size: 80px; line-height: 92px; margin-top: 80px; color: #2f6c80; }
.page p { font-size: 60px; line-height: 68px; margin-top: 69px; }
.chat {
  position: absolute;
  right: 29px;
  bottom: 29px;
  width: 110px;
  height: 110px;
  display: flex;
  align-items: center;
  justify-content: center;
  border-radius: 50%;
  background: #163554;
  box-shadow: 0 2px 20px rgba(0, 0, 0, .35);
}

/* Dock */
.dock {
  position: absolute;
  left: 51px;
  right: 51px;
  bottom: 10px;
  height: 86px;
  display: flex;
  padding: 0 4px;
  border: 2px solid rgba(255, 255, 255, .18);
  border-radius: 26px;
  background: linear-gradient(90deg, #5b5570 0%, #5c5484 40%, #63579b 55%, #8c55b4 64%, #9355b8 75%, #7c57a4 84%, #6f569e 100%);
}
.app, .thumb { position: relative; flex: 1; display: flex; justify-content: center; padding-top: 12px; }
.app > svg { width: 52px; height: 52px; }
.app-large { padding-top: 7px; }
.app-large > svg { width: 62px; height: 62px; }
.thumb { padding-top: 8px; }
.thumb > svg { width: 60px; height: 60px; }
.open::after {
  content: "";
  position: absolute;
  bottom: 2px;
  left: 50%;
  width: 8px;
  height: 8px;
  margin-left: -4px;
  border-radius: 50%;
  background: #08021c;
}
.divider { flex: .47; background: linear-gradient(#3b2370, #3b2370) center / 2px 62px no-repeat; }
.badge {
  position: absolute;
  top: 4px;
  right: 1px;
  min-width: 24px;
  height: 24px;
  padding: 0 4px;
  border-radius: 12px;
  background: #f24242;
  color: #fff;
  font-size: 14px;
  line-height: 24px;
}
.svg-jan { font: 700 12px Inter, sans-serif; fill: #fff; }
.svg-day { font: 300 32px Inter, sans-serif; fill: #222; }
.svg-tv { font: 600 21px Inter, sans-serif; fill: #fff; }
.svg-word { font: 700 14px Inter, sans-serif; fill: #fff; }
.svg-zoom { font: 600 14px Inter, sans-serif; fill: #fff; }
.svg-snag { font: 600 38px Inter, sans-serif; fill: #fff; }
```
